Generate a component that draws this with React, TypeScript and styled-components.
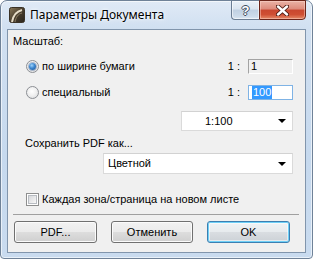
import React from 'react';
import styled, { createGlobalStyle, css } from 'styled-components';

const Global = createGlobalStyle`
  html, body { margin: 0; padding: 0; background: #ffffff; }
  body { width: 313px; height: 259px; overflow: hidden; }
  * { box-sizing: border-box; }
`;

const UI_FONT = `"Liberation Sans", Arial, sans-serif`;

const Window = styled.div`
  width: 313px;
  height: 259px;
  border: 1px solid #6f8298;
  border-radius: 7px 7px 4px 4px;
  background: linear-gradient(180deg, #e0eaf6 0px, #d1e0f1 26px, #c6d9ee 60%, #c9dbef 100%);
  box-shadow: inset 0 0 0 1px rgba(255, 255, 255, 0.6);
  display: flex;
  flex-direction: column;
  padding: 0 6px 5px 6px;
`;

const TitleBar = styled.div`
  height: 28px;
  display: flex;
  align-items: flex-start;
`;

const AppIcon = styled.svg`
  width: 16px;
  height: 16px;
  margin: 6px 0 0 2px;
  flex: none;
`;

const Title = styled.span`
  margin: 5px 0 0 5px;
  font: 12px/17px "Noto Sans", "Open Sans", sans-serif;
  color: #000;
  text-shadow: 0 0 6px rgba(255, 255, 255, 0.9), 0 0 3px rgba(255, 255, 255, 0.9);
`;

const CaptionButtons = styled.div`
  margin: -1px 0 0 auto;
  display: flex;
`;

const HelpButton = styled.div`
  width: 28px;
  height: 20px;
  border: 1px solid #6b7d93;
  border-right: none;
  border-radius: 0 0 0 4px;
  background: linear-gradient(180deg, #eaf1f8 0%, #dbe5f0 45%, #c0d0e2 50%, #cddbea 85%, #dce8f4 100%);
  box-shadow: inset 0 0 0 1px rgba(255, 255, 255, 0.55);
  display: flex;
  align-items: center;
  justify-content: center;
  font: bold 13px/1 "Liberation Sans", Arial, sans-serif;
  color: #ffffff;
  text-shadow: 1px 0 0 #3e4d60, -1px 0 0 #3e4d60, 0 1px 0 #3e4d60, 0 -1px 0 #3e4d60;
`;

const CloseButton = styled.div`
  width: 47px;
  height: 20px;
  border: 1px solid #6a2419;
  border-radius: 0 0 4px 0;
  background: linear-gradient(180deg, #eab3a6 0%, #dd8a7b 45%, #c9472f 50%, #cf4f33 75%, #e58a68 100%);
  box-shadow: inset 0 0 0 1px rgba(255, 220, 210, 0.45);
  display: flex;
  align-items: center;
  justify-content: center;
`;

const Client = styled.div`
  flex: 1;
  border: 1px solid #8195ac;
  background: #f0f0f0;
  display: flex;
  flex-direction: column;
  padding: 0 6px 0 5px;
  font: 11px/13px ${UI_FONT};
  color: #000;
`;

const SectionLabel = styled.div<{ $top: number; $indent?: number }>`
  margin-top: ${p => p.$top}px;
  padding-left: ${p => p.$indent ?? 0}px;
  height: 13px;
`;

const OptionRow = styled.div<{ $top: number; $height: number }>`
  margin-top: ${p => p.$top}px;
  height: ${p => p.$height}px;
  display: flex;
  align-items: center;
  justify-content: space-between;
  padding: 0 6px 0 13px;
`;

const RadioLabel = styled.label`
  display: flex;
  align-items: center;
  gap: 3px;
`;

const RadioDot = styled.span<{ $checked?: boolean }>`
  width: 13px;
  height: 13px;
  border-radius: 50%;
  border: 1px solid #8c8f94;
  background: radial-gradient(circle at 45% 40%, #ffffff 0%, #f1f1f1 45%, #d4d6d9 100%);
  display: flex;
  align-items: center;
  justify-content: center;
  ${p =>
    p.$checked &&
    css`
      &::after {
        content: '';
        width: 7px;
        height: 7px;
        border-radius: 50%;
        background: radial-gradient(circle at 40% 35%, #9fd4fb 0%, #3c86cf 45%, #1b4f8e 100%);
        box-shadow: 0 0 0 1px rgba(30, 70, 130, 0.35);
      }
    `}
`;

const RatioGroup = styled.div`
  display: flex;
  align-items: center;
  gap: 8px;
`;

const ScaleField = styled.div<{ $focused?: boolean }>`
  width: 45px;
  height: 100%;
  display: flex;
  align-items: center;
  padding-left: 2px;
  ${p =>
    p.$focused
      ? css`
          border: 1px solid #7fb3e5;
          background: #ffffff;
          padding-left: 3px;
        `
      : css`
          border-style: solid;
          border-width: 1px;
          border-color: #a3a3a3 #ffffff #ffffff #a3a3a3;
          background: #f0f0f0;
        `}
`;

const Selected = styled.span`
  background: #3399ff;
  color: #ffffff;
  padding: 0 1px;
  line-height: 13px;
`;

const ComboRow = styled.div<{ $top: number }>`
  margin-top: ${p => p.$top}px;
  display: flex;
  justify-content: flex-end;
  padding-right: 6px;
`;

const Combo = styled.div<{ $width: number; $height: number; $textLeft: number }>`
  width: ${p => p.$width}px;
  height: ${p => p.$height}px;
  border: 1px solid #dadada;
  border-top-color: #d2d2d2;
  background: #ffffff;
  display: flex;
  align-items: center;
  padding-left: ${p => p.$textLeft}px;
  padding-right: 6px;
`;

const ComboText = styled.span`
  flex: 1;
`;

const Arrow = styled.span`
  width: 0;
  height: 0;
  border-left: 4px solid transparent;
  border-right: 4px solid transparent;
  border-top: 4px solid #000;
`;

const CheckRow = styled.label<{ $top: number }>`
  margin-top: ${p => p.$top}px;
  padding-left: 13px;
  display: flex;
  align-items: center;
  gap: 3px;
  height: 13px;
`;

const CheckBox = styled.span`
  width: 13px;
  height: 13px;
  border: 1px solid #8e8f8f;
  background: #ffffff;
  padding: 1px;
  display: flex;
  &::after {
    content: '';
    flex: 1;
    border: 1px solid #b8bcc2;
    background: linear-gradient(135deg, #d6d8db 0%, #eeeeef 70%, #fafafa 100%);
  }
`;

const Separator = styled.div<{ $top: number }>`
  margin-top: ${p => p.$top}px;
  height: 1px;
  background: #a0a0a0;
`;

const ButtonRow = styled.div<{ $top: number }>`
  margin-top: ${p => p.$top}px;
  display: flex;
  padding-left: 1px;
  gap: 14px;
`;

const PushButton = styled.button<{ $default?: boolean; $width: number }>`
  width: ${p => p.$width}px;
  height: 22px;
  border: 1px solid #707070;
  border-radius: 3px;
  background: linear-gradient(180deg, #f2f2f2 0%, #ebebeb 48%, #dddddd 52%, #cfcfcf 100%);
  box-shadow: inset 0 0 0 1px #fbfbfb;
  font: 11px/13px ${UI_FONT};
  color: #000;
  padding: 0;
  ${p =>
    p.$default &&
    css`
      border-color: #3c7fb1;
      box-shadow: inset 0 0 0 1px #6fd0f7, inset 0 0 0 2px rgba(255, 255, 255, 0.5);
      background: linear-gradient(180deg, #f0f3f5 0%, #e7ebee 48%, #d9dde1 52%, #ccd1d6 100%);
    `}
`;

export default function App() {
  return (
    <>
      <Global />
      <Window>
        <TitleBar>
          <AppIcon viewBox="0 0 16 16">
            <defs>
              <linearGradient id="ig" x1="0" y1="0" x2="1" y2="1">
                <stop offset="0" stopColor="#8c7a5a" />
                <stop offset="0.5" stopColor="#4a3f2e" />
                <stop offset="1" stopColor="#2a241b" />
              </linearGradient>
            </defs>
            <rect x="0.5" y="0.5" width="15" height="15" rx="2" fill="url(#ig)" stroke="#3a3226" />
            <path d="M3 15 C4 9 7 4.5 13 3" stroke="#e6dcc6" strokeWidth="2" fill="none" />
            <path d="M6 15 C7 10 9 7 13 6" stroke="#8a7c62" strokeWidth="1" fill="none" />
          </AppIcon>
          <Title>Параметры Документа</Title>
          <CaptionButtons>
            <HelpButton>?</HelpButton>
            <CloseButton>
              <svg width="13" height="11" viewBox="0 0 13 11">
                <path d="M2 1.5 L11 9.5 M11 1.5 L2 9.5" stroke="#4a1a12" strokeWidth="4.2" strokeLinecap="round" />
                <path d="M2 1.5 L11 9.5 M11 1.5 L2 9.5" stroke="#ffffff" strokeWidth="2.4" strokeLinecap="round" />
              </svg>
            </CloseButton>
          </CaptionButtons>
        </TitleBar>
        <Client>
          <SectionLabel $top={5}>Масштаб:</SectionLabel>
          <OptionRow $top={8} $height={21}>
            <RadioLabel>
              <RadioDot $checked />
              по ширине бумаги
            </RadioLabel>
            <RatioGroup>
              <span>1 :</span>
              <ScaleField>1</ScaleField>
            </RatioGroup>
          </OptionRow>
          <OptionRow $top={4} $height={22}>
            <RadioLabel>
              <RadioDot />
              специальный
            </RadioLabel>
            <RatioGroup>
              <span>1 :</span>
              <ScaleField $focused>
                <Selected>100</Selected>
              </ScaleField>
            </RatioGroup>
          </OptionRow>
          <ComboRow $top={8}>
            <Combo $width={112} $height={20} $textLeft={23}>
              <ComboText>1:100</ComboText>
              <Arrow />
            </Combo>
          </ComboRow>
          <SectionLabel $top={6} $indent={12}>Сохранить PDF как...</SectionLabel>
          <ComboRow $top={3}>
            <Combo $width={190} $height={21} $textLeft={4}>
              <ComboText>Цветной</ComboText>
              <Arrow />
            </Combo>
          </ComboRow>
          <CheckRow $top={19}>
            <CheckBox />
            Каждая зона/страница на новом листе
          </CheckRow>
          <Separator $top={8} />
          <ButtonRow $top={6}>
            <PushButton $width={83}>PDF...</PushButton>
            <PushButton $width={82}>Отменить</PushButton>
            <PushButton $width={83} $default>OK</PushButton>
          </ButtonRow>
        </Client>
      </Window>
    </>
  );
}
